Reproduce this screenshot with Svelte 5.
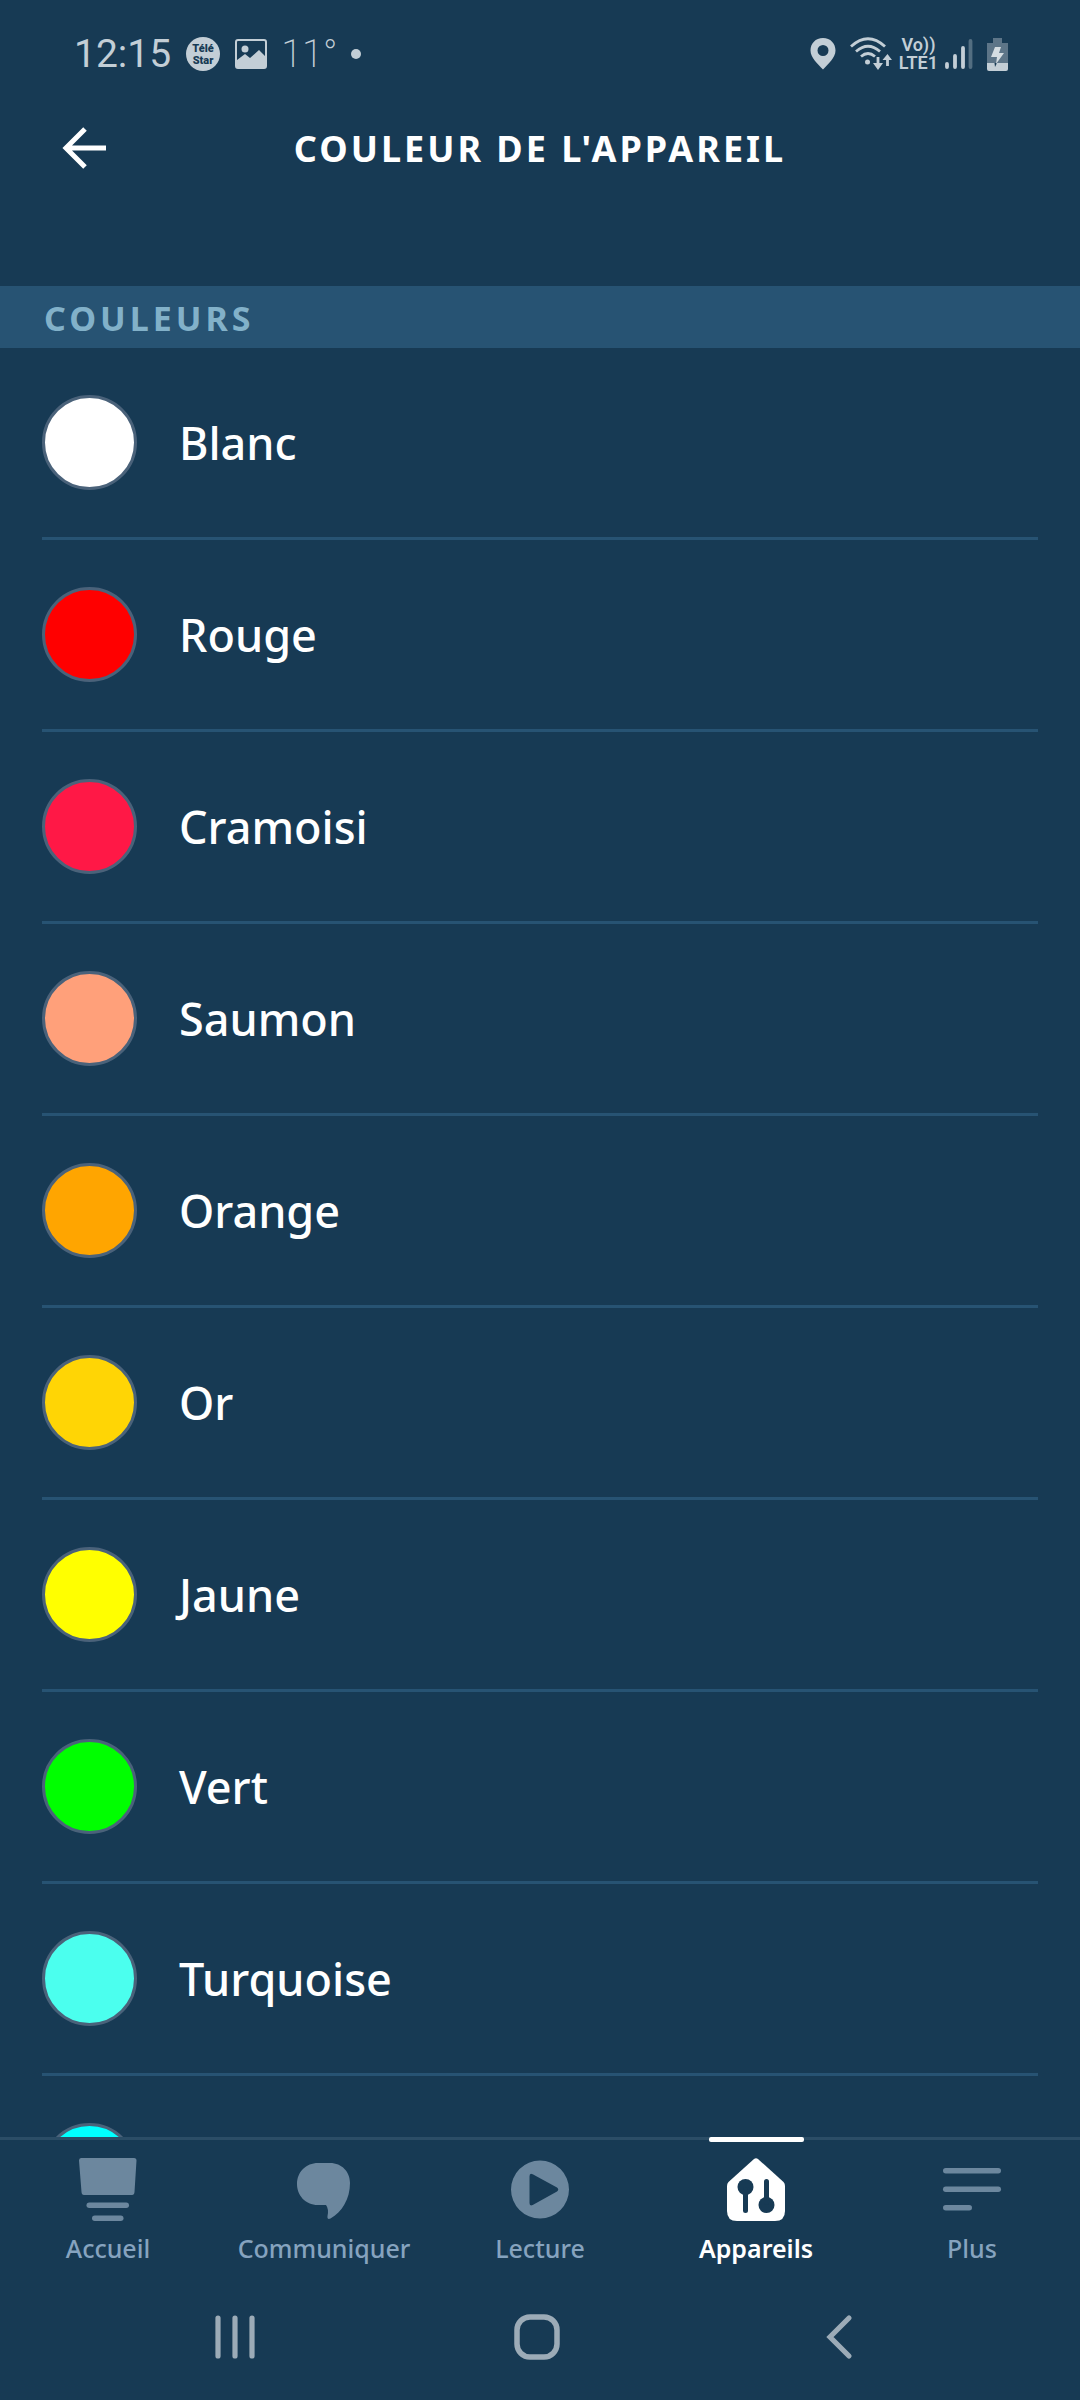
<script>
  let active = "Appareils";

  const colors = [
    { name: "Blanc", hex: "#ffffff" },
    { name: "Rouge", hex: "#ff0000" },
    { name: "Cramoisi", hex: "#ff1846" },
    { name: "Saumon", hex: "#ffa07a" },
    { name: "Orange", hex: "#ffa500" },
    { name: "Or", hex: "#ffd505" },
    { name: "Jaune", hex: "#ffff00" },
    { name: "Vert", hex: "#00ff00" },
    { name: "Turquoise", hex: "#4bffee" },
    { name: "", hex: "#00ffff" }
  ];

  const tabs = ["Accueil", "Communiquer", "Lecture", "Appareils", "Plus"];
</script>

<div class="screen">
  <div class="status">
    <div class="group left">
      <span class="time">12:15</span>
      <svg class="tele" width="36" height="36" viewBox="0 0 36 36">
        <circle cx="18" cy="18" r="17" fill="#c3ced6" />
        <text x="18" y="16" text-anchor="middle">Télé</text>
        <text x="18" y="28" text-anchor="middle">Star</text>
      </svg>
      <svg width="32" height="30" viewBox="0 0 32 30">
        <rect x="1" y="1" width="30" height="28" rx="2" fill="none" stroke="#c3ced6" stroke-width="2" />
        <path d="M2 21 L10 15 L15 19 L24 11 L31 18 V29 H2 Z" fill="#c3ced6" />
        <circle cx="10" cy="10" r="3.5" fill="#c3ced6" />
      </svg>
      <span class="temp">11°</span>
      <svg width="10" height="10" viewBox="0 0 10 10">
        <circle cx="5" cy="5" r="5" fill="#c3ced6" />
      </svg>
    </div>
    <div class="group">
      <svg width="26" height="32" viewBox="0 0 26 32">
        <path fill-rule="evenodd" fill="#c3ced6" d="M13 0 C5.500 0 0.500 5.500 0.500 12.500 C0.500 20 8 26 13 31.500 C18 26 25.500 20 25.500 12.500 C25.500 5.500 20.500 0 13 0 Z M13 7 A5.500 5.500 0 1 1 13 18 A5.500 5.500 0 1 1 13 7 Z" />
      </svg>
      <div class="network">
        <svg width="42" height="34" viewBox="0 0 42 34" fill="none" stroke="#c3ced6" stroke-width="2.800">
          <path d="M1 9.500 Q18 -6 35 9.500 M6 14.500 Q18 4 30 14.500 M11 19.500 Q18 13.500 25 19.500" />
          <circle cx="17.500" cy="25" r="2.500" fill="#c3ced6" stroke="none" />
          <path d="M28 20 V30 M37.500 29 V20" stroke-width="2.800" />
          <path d="M23 26 H33 L28 33 Z M32.500 23 H42 L37.500 17 Z" fill="#c3ced6" stroke="none" />
        </svg>
        <div class="volte">
          <span>Vo))</span>
          <span>LTE1</span>
        </div>
        <svg width="28" height="32" viewBox="0 0 28 32" stroke="#c3ced6" stroke-width="3.800" stroke-linecap="round">
          <path d="M2 26 V29 M10 18 V29 M18 10 V29" />
          <path d="M25.500 3 V29" opacity="0.350" />
        </svg>
      </div>
      <svg width="21" height="33" viewBox="0 0 21 33">
        <path d="M6 0 H15 V5 H21 V25 H0 V5 H6 Z" fill="#5d7588" />
        <path d="M0 25 H21 V31 Q21 33 19 33 H2 Q0 33 0 31 Z" fill="#c3ced6" />
        <path d="M10 25 L8 29 L7.500 25 Z" fill="#173a54" />
        <path d="M8 9 H14 L12 15 H17 L9 26 L10 19 H4 Z" fill="#d5dde2" />
      </svg>
    </div>
  </div>

  <header>
    <button aria-label="Retour">
      <svg width="44" height="42" viewBox="0 0 44 42" fill="none" stroke="#fff" stroke-width="5">
        <path d="M23 2 L4 21 L23 40 M4 21 H44" />
      </svg>
    </button>
    <h1>COULEUR DE L'APPAREIL</h1>
  </header>

  <h2>COULEURS</h2>

  <main>
    <ul>
      {#each colors as color}
        <li>
          <button class="color">
            <span class="swatch" style="background-color: {color.hex}"></span>
            {color.name}
          </button>
        </li>
      {/each}
    </ul>
  </main>

  <nav class="tabs">
    {#each tabs as tab}
      <button class="tab" class:active={active === tab} on:click={() => (active = tab)}>
        <svg width="60" height="64" viewBox="0 0 60 64">
          {#if tab === "Accueil"}
            <path d="M3 0 H56 Q58.500 0 58.500 2.500 L56.500 34 Q56.300 37 54 37 H6 Q3.700 37 3.500 34 L1 2.500 Q1 0 3 0 Z" />
            <rect x="8.500" y="44.500" width="42.500" height="5.500" rx="2.750" />
            <rect x="14" y="57.500" width="31.500" height="5.500" rx="2.750" />
          {:else if tab === "Communiquer"}
            <path d="M24 5 H36 C48 5 56 14 56 25 C56 41 48 54 36.500 60.500 Q33 62 33.500 58 Q35 51 32 47 H24 C11 47 3 37 3 26 C3 14 12 5 24 5 Z" />
          {:else if tab === "Lecture"}
            <path fill-rule="evenodd" d="M30 2.500 A29 29 0 1 1 30 60.500 A29 29 0 1 1 30 2.500 Z M19.500 18.500 V45 Q19.500 48.500 22.700 47 L47 33.500 Q49.500 31.500 47 29.500 L22.700 16.300 Q19.500 14.500 19.500 18.500 Z" />
          {:else if tab === "Appareils"}
            <path d="M28 1 Q30 -0.500 32 1 L57.500 24 Q59 25.500 59 28 V53 Q59 63 49 63 H11 Q1 63 1 53 V28 Q1 25.500 2.500 24 Z" />
            <g class="cut">
              <circle cx="19.500" cy="29" r="8" />
              <rect x="17" y="29" width="5" height="26" rx="2.500" />
              <circle cx="40.500" cy="47" r="8" />
              <rect x="38" y="21" width="5" height="26" rx="2.500" />
            </g>
          {:else}
            <rect x="1" y="10" width="58" height="5.500" rx="2.750" />
            <rect x="1" y="28.500" width="58" height="5.500" rx="2.750" />
            <rect x="1" y="47" width="29" height="5.500" rx="2.750" />
          {/if}
        </svg>
        <span>{tab}</span>
      </button>
    {/each}
  </nav>

  <div class="system">
    <button aria-label="Applications récentes">
      <svg width="46" height="48" viewBox="0 0 46 48" stroke-width="5.200">
        <path d="M6 5 V43 M23 5 V43 M40 5 V43" />
      </svg>
    </button>
    <button aria-label="Écran d'accueil">
      <svg width="48" height="48" viewBox="0 0 48 48" stroke-width="5.500">
        <rect x="4" y="4" width="40" height="40" rx="13" />
      </svg>
    </button>
    <button aria-label="Précédent">
      <svg width="28" height="48" viewBox="0 0 28 48" stroke-width="5.200">
        <path d="M24 5 L5 24 L24 43" />
      </svg>
    </button>
  </div>
</div>

<style>
  :global(body) {
    background-color: #173a54;
  }

  .screen {
    display: flex;
    flex-direction: column;
    height: 100vh;
    overflow: hidden;
    background-color: #173a54;
    color: #fff;
    font-family: "Noto Sans", "Open Sans", sans-serif;
  }

  button {
    border: none;
    padding: 0;
    background: none;
    color: inherit;
    font: inherit;
    cursor: pointer;
  }

  svg {
    display: block;
    flex: none;
  }

  .status {
    display: flex;
    justify-content: space-between;
    height: 108px;
    padding: 0 72px 0 74px;
    box-sizing: border-box;
    color: #c3ced6;
    font-family: Roboto, sans-serif;
  }

  .group {
    display: flex;
    align-items: center;
    gap: 14px;
  }

  .time {
    font-size: 39px;
  }

  .tele text {
    fill: #173a54;
    font-size: 11px;
    font-weight: 900;
  }

  .temp {
    font-size: 38px;
    font-weight: 200;
  }

  .network {
    display: flex;
    align-items: center;
    gap: 7px;
  }

  .volte {
    display: flex;
    flex-direction: column;
    align-items: center;
    font-size: 18px;
    line-height: 18px;
    font-weight: 600;
  }

  header {
    display: grid;
    grid-template-columns: 44px 1fr 44px;
    align-items: center;
    height: 80px;
    margin-bottom: 98px;
    padding: 0 62px;
  }

  h1 {
    margin: 0;
    font-size: 36px;
    font-weight: 700;
    letter-spacing: 3px;
    text-align: center;
  }

  h2 {
    margin: 0;
    padding: 2px 44px 0;
    background-color: #275373;
    color: #82b1c9;
    font-size: 34px;
    line-height: 60px;
    font-weight: 700;
    letter-spacing: 4px;
  }

  main {
    flex: 1;
    min-height: 0;
    overflow: hidden;
  }

  ul {
    margin: 0;
    padding: 0 42px;
    list-style: none;
  }

  li {
    border-bottom: 3px solid #275373;
  }

  .color {
    display: flex;
    align-items: center;
    gap: 42px;
    width: 100%;
    height: 189px;
    font-size: 45px;
    font-weight: 500;
    text-align: left;
  }

  .swatch {
    width: 95px;
    height: 95px;
    box-sizing: border-box;
    border: 3px solid #4a627a;
    border-radius: 50%;
  }

  .tabs {
    display: grid;
    grid-template-columns: repeat(5, 1fr);
    height: 140px;
    border-top: 3px solid #2b4d66;
  }

  .tab {
    position: relative;
    display: flex;
    flex-direction: column;
    align-items: center;
    gap: 8px;
    padding-top: 18px;
    color: #86a3bf;
    font-size: 25px;
    line-height: 36px;
    font-weight: 500;
  }

  .tab svg {
    fill: #6c879e;
  }

  .tab.active {
    color: #fff;
    font-weight: 600;
  }

  .tab.active svg {
    fill: #fff;
  }

  .tab.active::before {
    content: "";
    position: absolute;
    top: -3px;
    width: 95px;
    height: 5px;
    border-radius: 2px;
    background-color: #fff;
  }

  .tab .cut {
    fill: #173a54;
  }

  .system {
    display: grid;
    grid-template-columns: repeat(3, 1fr);
    height: 120px;
    padding: 0 90px 0 84px;
  }

  .system button {
    display: flex;
    align-items: center;
    justify-content: center;
    height: 114px;
  }

  .system svg {
    fill: none;
    stroke: #9cabb7;
    stroke-linecap: round;
  }
</style>
